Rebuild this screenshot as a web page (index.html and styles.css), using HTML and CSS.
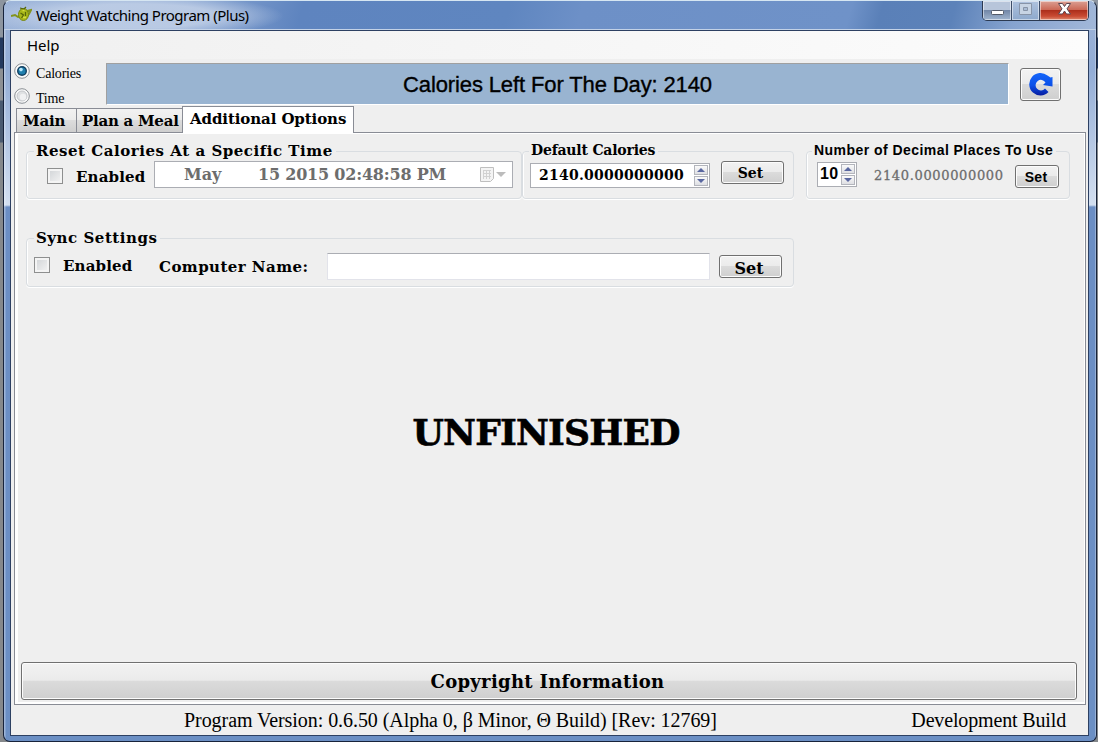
FILE: index.html
```html
<!DOCTYPE html>
<html lang="en">
<head>
<meta charset="utf-8">
<title>Weight Watching Program (Plus)</title>
<link rel="stylesheet" href="styles.css">
</head>
<body>
<div class="window">
  <header class="titlebar">
    <svg class="app-icon" width="21" height="17" viewBox="0 0 21 17"><path d="M0 10l4-1 3 2 3-1M16 5l4-1-2 4-2 2" fill="none" stroke="#83941b" stroke-width="2"/><ellipse cx="12.500" cy="8.500" rx="5" ry="6" fill="#a8b719" stroke="#75850f"/><path d="M9 2l4 1 2-2M9.500 7l3 2-2 3M14.500 6v4" fill="none" stroke="#56660b" stroke-width="1.200"/><path d="M11.500 4.500h2M12 11.500h3" stroke="#d5dd43" stroke-width="1.400"/></svg>
    <span class="title">Weight Watching Program (Plus)</span>
    <div class="controls">
      <span class="ctl min"><svg width="28" height="18"><rect x="8.500" y="10.500" width="12" height="4" rx="1" fill="#fff" stroke="#535a68"/></svg></span>
      <span class="ctl max"><svg width="27" height="18"><path d="M7.500 3.500h12v11h-12z" fill="#c7d4e4" stroke="#8794a8"/><path d="M11.500 7.500h4v3h-4z" fill="#a9bcd5" stroke="#8794a8"/></svg></span>
      <span class="ctl close"><svg width="48" height="18"><path d="M18.500 3.500h4l2 3 2-3h4l-3.500 5.300 3.500 5.200h-4l-2-3-2 3h-4l3.500-5.200z" fill="#fff" stroke="#5d4650"/></svg></span>
    </div>
  </header>
  <main class="client">
    <nav class="menu">Help</nav>
    <section class="top">
      <div class="modes">
        <label class="mode"><svg width="16" height="16"><circle cx="8" cy="8" r="7.300" fill="#fafafa" stroke="#8a8f94"/><circle cx="8" cy="8" r="5" fill="#123f60"/><circle cx="8" cy="8" r="3.600" fill="#1f7fae"/><circle cx="7" cy="6.600" r="1.800" fill="#b9e8fb"/></svg><span>Calories</span></label>
        <label class="mode"><svg width="16" height="16"><circle cx="8" cy="8" r="7.300" fill="#fafafa" stroke="#8a8f94"/><circle cx="8" cy="8" r="5" fill="#dfe1e3" stroke="#c3c6ca"/><circle cx="9" cy="9" r="3.200" fill="#f0f1f2"/></svg><span>Time</span></label>
      </div>
      <div class="banner"><span>Calories Left For The Day: 2140</span></div>
      <button class="btn refresh"><svg width="26" height="26" viewBox="0 0 26 26"><defs><linearGradient id="blue" x1="0" y1="0" x2="0" y2="1"><stop offset="0" stop-color="#1465fa"/><stop offset=".55" stop-color="#0b50e8"/><stop offset="1" stop-color="#071ca0"/></linearGradient></defs><path d="M19.500 4.500L22.500 6.500L24.500 6V15.500L15 14L17.500 11.500A5.300 5.300 0 1 0 17 17.500L20.500 21A11.200 11.200 0 1 1 19.500 4.500Z" fill="url(#blue)"/></svg></button>
    </section>
    <div class="tabs">
      <span class="tab tab-main">Main</span>
      <span class="tab tab-plan">Plan a Meal</span>
      <span class="tab active">Additional Options</span>
    </div>
    <section class="panel">
      <div class="row">
        <fieldset class="group reset">
          <legend class="t-reset">Reset Calories At a Specific Time</legend>
          <div class="body">
            <i class="check"></i><span class="t-enabled">Enabled</span>
            <div class="date"><span class="month">May</span><span class="rest">15 2015 02:48:58 PM</span>
              <svg width="28" height="18"><path d="M1.500 1.500h13v11l-3 3h-10z" fill="#f4f4f4" stroke="#bfbfbf"/><path d="M4 4.500h8M4 7.500h8M4 10.500h8M4.500 4v9M7.500 4v9M10.500 4v9" stroke="#d2d2d2"/><path d="M17 6h10l-5 5z" fill="#bcbcbc"/></svg></div>
          </div>
        </fieldset>
        <fieldset class="group defaults">
          <legend class="t-default">Default Calories</legend>
          <div class="body">
            <div class="number wide"><span>2140.0000000000</span><div class="spin"><i class="up"></i><i class="down"></i></div></div>
            <button class="btn set-a">Set</button>
          </div>
        </fieldset>
        <fieldset class="group decimals">
          <legend class="t-decimal">Number of Decimal Places To Use</legend>
          <div class="body">
            <div class="number small"><span>10</span><div class="spin"><i class="up"></i><i class="down"></i></div></div>
            <span class="preview">2140.0000000000</span>
            <button class="btn set-b">Set</button>
          </div>
        </fieldset>
      </div>
      <fieldset class="group sync">
        <legend class="t-sync">Sync Settings</legend>
        <div class="body">
          <i class="check"></i><span class="t-enabled">Enabled</span><span class="t-computer">Computer Name:</span>
          <div class="input"></div>
          <button class="btn set-c">Set</button>
        </div>
      </fieldset>
      <div class="unfinished"><span>UNFINISHED</span></div>
      <button class="btn copyright"><span>Copyright Information</span></button>
    </section>
    <footer class="status"><span class="version">Program Version: 0.6.50 (Alpha 0, β Minor, Θ Build) [Rev: 12769]</span><span class="build">Development Build</span></footer>
  </main>
</div>
</body>
</html>
```
FILE: styles.css
```css
* { box-sizing: border-box; }
body { margin: 0; width: 1098px; height: 742px; overflow: hidden; background: linear-gradient(#8d959f 0 37px, #24395d 38px 68px, #8d9094 69px 100px, #4a5a70 101px 142px, #85888b 143px); font-family: "DejaVu Serif", serif; color: #000; white-space: nowrap; }
.window { width: 1094px; height: 742px; margin-left: 3px; padding: 0 6px 5px; border: 1px solid #17233b; border-top-color: #d6e6f2; border-radius: 8px 8px 7px 7px; background: linear-gradient(90deg, #fff5 0 1px, transparent 2px 1091px, #fff9 1092px), linear-gradient(#9db3d7 0, #93add6 70px, #d3dff0 204px, #6b8ec4 206px, #6b8fc4 100%); }
.titlebar { height: 29px; margin: 0 -6px; padding-left: 7px; display: flex; align-items: flex-start; border-bottom: 1px solid #c3d2e7; border-radius: 7px 7px 0 0; background: radial-gradient(ellipse 150px 22px at 130px 15px, #c4d2e8cc 55%, transparent), linear-gradient(105deg, #9fb6da 0, #8aa6d2 180px, #5e84bf 290px, #5f86c0 490px, #6d90c7 560px, #6f92c8 820px, #5a80b8 850px, #5c82b9 920px, #86a3cf 980px, #a2b8d9 100%); }
.app-icon { margin-top: 5px; }
.title { font: 15px/20px "Noto Sans", sans-serif; margin: 4px 0 0 4px; letter-spacing: -.51px; }
.controls { margin-left: auto; margin-right: 7px; height: 20px; display: flex; border: 1px solid #2c3a52; border-top: 0; border-radius: 0 0 5px 5px; overflow: hidden; }
.ctl { height: 19px; box-shadow: inset 0 0 0 1px #ffffff80; }
.ctl svg { display: block; margin-top: -1px; }
.min { width: 29px; background: linear-gradient(#b7c5da 45%, #7388a8 50%, #a0b5cf); border-right: 1px solid #3d4e69; }
.max { width: 28px; background: linear-gradient(#aec2de, #8ea9cc); border-right: 1px solid #3d4e69; }
.close { width: 48px; background: linear-gradient(#dba094 0, #cc6a58 45%, #ad2f1c 50%, #c94b33 80%, #df8a70); }
.client { height: 706px; width: 1079px; border: 1px solid #2d4062; background: #efefef; display: flex; flex-direction: column; }
.menu { height: 28px; flex: none; padding-left: 16px; background: linear-gradient(90deg, #f0f0f0, #fcfcfc); font: 15px/29px "Noto Sans", sans-serif; letter-spacing: -.1px; }
.top { height: 47px; flex: none; display: flex; }
.modes { width: 95px; padding: 4px 0 0 3px; display: flex; flex-direction: column; gap: 9px; }
.mode { height: 16px; display: flex; gap: 6px; font: 14px/21px "Liberation Serif", serif; letter-spacing: -.2px; }
.banner { width: 903px; height: 42px; margin-top: 4px; border: 1px solid #a0a0a0; border-right-color: #fff; border-bottom-color: #fff; background: #99b4d1; text-align: center; font: 22px/42px "Liberation Sans", sans-serif; letter-spacing: -.12px; -webkit-text-stroke: .35px #000; }
.btn { margin: 0; padding: 0; border: 1px solid #707070; border-radius: 3px; background: linear-gradient(#f2f2f2, #ebebeb 48%, #dbdbdb 50%, #cfcfcf); box-shadow: inset 0 0 0 1px #fcfcfc; color: #000; font-family: "DejaVu Serif", serif; font-weight: bold; }
.refresh { width: 41px; height: 33px; margin: 9px 0 0 11px; display: grid; place-items: center; }
.refresh svg { display: block; margin-top: -2px; }
.tabs { height: 27px; flex: none; padding-left: 5px; display: flex; align-items: flex-end; font-weight: bold; font-size: 15px; z-index: 1; }
.tab { height: 25px; border: 1px solid #898c95; background: linear-gradient(#f2f2f2, #ebebeb 48%, #dcdcdc 50%, #cfcfcf); line-height: 24px; padding-left: 6px; }
.tab-main { width: 60px; letter-spacing: -.2px; border-right: 0; }
.tab-plan { width: 106px; letter-spacing: -.25px; border-right: 0; padding-left: 5px; }
.active { width: 172px; height: 27px; padding-left: 7px; background: #fff; border-bottom: 0; letter-spacing: -.1px; line-height: 25px; }
.panel { margin: -1px 2px 0 3px; height: 573px; flex: none; border: 1px solid #898c95; background: #efefef; box-shadow: inset 3px 0 #fff, inset -1px -2px #fff, inset 0 1px #fff; display: flex; flex-direction: column; padding: 10px 7px 4px 6px; }
.row { display: flex; padding-left: 5px; }
.group { min-width: 0; margin: 0; padding: 0; height: 56px; border: 1px solid #d9dde1; border-radius: 4px; box-shadow: 0 1px #fff, inset 1px 0 #fff; }
.group legend { height: 16px; line-height: 16px; margin-left: 7px; padding: 0 3px 0 2px; font-weight: bold; font-size: 15px; }
.body { display: flex; align-items: flex-start; font-weight: bold; font-size: 15px; }
.reset { width: 496px; }
.defaults { width: 272px; }
.decimals { width: 264px; margin-left: 12px; }
.t-reset, .t-sync { letter-spacing: .53px; }
.group .t-default { font-size: 14px; letter-spacing: -.2px; line-height: 15px; margin-left: 6px; }
.group .t-decimal { font: bold 14px/15px "Liberation Sans", sans-serif; letter-spacing: .45px; margin-left: 5px; }
.check { width: 16px; height: 16px; border: 1px solid #8e8f8f; background: linear-gradient(135deg, #cfd2d5, #f5f5f5); box-shadow: inset 0 0 0 2px #f4f4f4; }
.t-enabled { line-height: 20px; letter-spacing: .15px; }
.reset .check { margin: 9px 0 0 20px; }
.reset .t-enabled { width: 78px; margin: 8px 0 0 13px; }
.date { width: 359px; height: 27px; margin-top: 2px; border: 1px solid #abadb3; background: #fff; color: #6d6d6d; display: flex; line-height: 25px; padding-left: 29px; font-size: 16px; }
.month { width: 74px; }
.rest { width: 221px; letter-spacing: -.2px; }
.date svg { margin-top: 4px; }
.number { display: flex; justify-content: space-between; border: 1px solid #abadb3; background: #fff; height: 25px; padding: 1px; line-height: 20px; }
.wide { width: 180px; margin: 4px 0 0 7px; padding-left: 8px; font-size: 14px; letter-spacing: .25px; }
.spin { width: 14px; display: flex; flex-direction: column; gap: 1px; }
.spin i { height: 10px; border: 1px solid #b3b5bc; background: linear-gradient(#fafafa, #dedfe3); display: grid; place-items: center; }
.spin i::before { content: ""; border: 4px solid transparent; }
.spin .up::before { border-top: 0; border-bottom-color: #5967a0; }
.spin .down::before { border-bottom: 0; border-top-color: #5967a0; }
.set-a { width: 63px; height: 23px; margin: 2px 0 0 11px; padding: 1px 4px 0 0; font-size: 14px; }
.small { width: 40px; margin: 3px 0 0 10px; font: bold 16px/19px "Liberation Sans", sans-serif; padding-left: 2px; letter-spacing: .4px; }
.preview { width: 141px; margin: 7px 0 0 17px; line-height: 20px; font-size: 13px; font-weight: normal; letter-spacing: .65px; color: #6d6d6d; -webkit-text-stroke: .3px #6d6d6d; }
.set-b { width: 44px; height: 23px; margin-top: 6px; font: bold 14px/20px "Liberation Sans", sans-serif; padding-right: 2px; letter-spacing: .3px; }
.sync { width: 768px; height: 57px; margin: 31px 0 0 5px; }
.sync .check { margin: 11px 0 0 7px; }
.sync .t-enabled { width: 96px; margin: 10px 0 0 13px; }
.t-computer { width: 168px; margin-top: 11px; line-height: 20px; letter-spacing: .45px; }
.input { width: 383px; height: 27px; margin-top: 7px; border: 1px solid #e2e3ea; border-top-color: #abadb3; background: #fff; }
.set-c { width: 63px; height: 23px; margin: 9px 0 0 9px; font-size: 16px; line-height: 22px; padding: 2px 3px 0 0; }
.unfinished { flex: 1; padding-top: 120px; width: 1050px; text-align: center; font-weight: bold; font-size: 36px; line-height: 50px; letter-spacing: -.8px; -webkit-text-stroke: .6px #000; }
.copyright { width: 1056px; height: 38px; font-size: 18px; letter-spacing: .3px; padding-right: 3px; flex: none; }
.status { flex: 1; min-height: 0; padding: 0 22px 0 173px; display: flex; justify-content: space-between; font: 20px/31px "Liberation Serif", serif; letter-spacing: -.06px; }
.build { letter-spacing: -.15px; }
```
